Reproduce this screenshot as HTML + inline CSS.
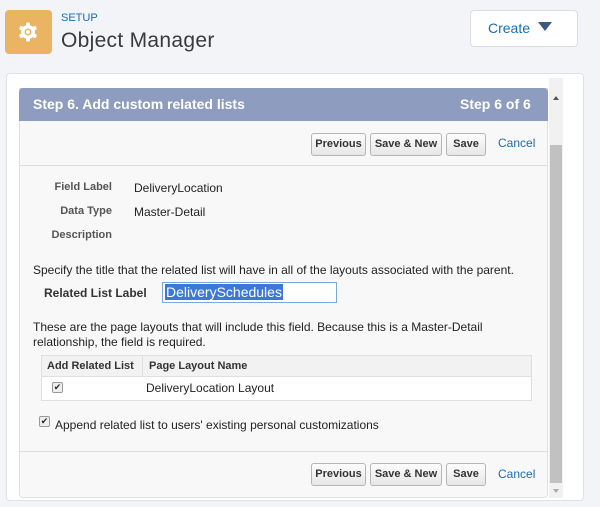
<!DOCTYPE html>
<html><head><style>
*{margin:0;padding:0;box-sizing:border-box}
body{width:600px;height:507px;background:#f3f4f8;font-family:"Liberation Sans",Arial,sans-serif;position:relative;overflow:hidden}
.a{position:absolute}
.btn{position:absolute;height:23px;border:1px solid #b5b5b5;border-radius:3px;background:linear-gradient(#fdfdfd,#e6e6e6);font-size:11px;font-weight:bold;color:#333;text-align:center;line-height:21px}
.lbl{position:absolute;font-size:11px;font-weight:bold;color:#555;text-align:right;width:112px;left:0}
.val{position:absolute;left:134px;font-size:12px;color:#222}
.t{position:absolute;font-size:12px;color:#222;white-space:nowrap}
.cb{position:absolute;width:11px;height:11px;border:1px solid #999;border-radius:2px;background:#eee;font-size:9px;line-height:9px;text-align:center;color:#222}
</style></head><body>
<div class="a" style="left:5px;top:10px;width:47px;height:44px;background:#ebb463;border-radius:4px"></div>
<svg class="a" style="left:17px;top:21px" width="22" height="22" viewBox="0 0 22 22"><g fill="#fff"><circle cx="11" cy="11" r="7"/><rect x="9" y="1.5" width="4" height="19" rx="1"/><rect x="9" y="1.5" width="4" height="19" rx="1" transform="rotate(60 11 11)"/><rect x="9" y="1.5" width="4" height="19" rx="1" transform="rotate(120 11 11)"/></g><circle cx="11" cy="11" r="3.5" fill="#ebb463"/><circle cx="11" cy="11" r="2" fill="#fff"/></svg>
<div class="a" style="left:61px;top:12px;font-size:11px;color:#1a6cb8">SETUP</div>
<div class="a" style="left:61px;top:29px;font-size:21px;color:#3a3a3a;letter-spacing:0.3px">Object Manager</div>
<div class="a" style="left:470px;top:10px;width:108px;height:37px;background:#fff;border:1px solid #d8dde6;border-radius:4px"></div>
<div class="a" style="left:488px;top:20px;font-size:14px;color:#1a6cb8">Create</div>
<div class="a" style="left:538px;top:22px;width:0;height:0;border-left:7px solid transparent;border-right:7px solid transparent;border-top:9px solid #3d5780"></div>
<div class="a" style="left:6px;top:73px;width:578px;height:428px;background:#fff;border:1px solid #dfe2e8;border-radius:4px"></div>
<div class="a" style="left:19px;top:88px;width:529px;height:410px;background:#f8f8f8;border:1px solid #e0e0e0;border-radius:0 0 4px 4px"></div>
<div class="a" style="left:19px;top:88px;width:529px;height:33px;background:#8e9dbf;border-radius:4px 4px 0 0"></div>
<div class="a" style="left:33px;top:96px;font-size:14px;font-weight:bold;color:#fff">Step 6. Add custom related lists</div>
<div class="a" style="left:460px;top:96px;font-size:14px;font-weight:bold;color:#fff">Step 6 of 6</div>
<div class="a" style="left:20px;top:165px;width:527px;height:1px;background:#dcdcdc"></div>
<div class="a" style="left:20px;top:451px;width:527px;height:1px;background:#dcdcdc"></div>
<div class="btn" style="left:311px;top:133px;width:55px">Previous</div>
<div class="btn" style="left:370px;top:133px;width:72px">Save &amp; New</div>
<div class="btn" style="left:446px;top:133px;width:40px">Save</div>
<div class="a" style="left:498px;top:136px;font-size:12px;color:#1a6cb8">Cancel</div>
<div class="btn" style="left:311px;top:463px;width:55px">Previous</div>
<div class="btn" style="left:370px;top:463px;width:72px">Save &amp; New</div>
<div class="btn" style="left:446px;top:463px;width:40px">Save</div>
<div class="a" style="left:498px;top:467px;font-size:12px;color:#1a6cb8">Cancel</div>
<div class="lbl" style="top:181px">Field Label</div><div class="val" style="top:181px">DeliveryLocation</div>
<div class="lbl" style="top:205px">Data Type</div><div class="val" style="top:205px">Master-Detail</div>
<div class="lbl" style="top:229px">Description</div>
<div class="t" style="left:33px;top:263px">Specify the title that the related list will have in all of the layouts associated with the parent.</div>
<div class="a" style="left:44px;top:286px;font-size:12px;font-weight:bold;color:#333">Related List Label</div>
<div class="a" style="left:162px;top:282px;width:175px;height:21px;border:1px solid #7aa7e0;background:#fff"></div>
<div class="a" style="left:165px;top:284px;font-size:14px;color:#fff;background:#3b78d8;padding:0 1px;line-height:16px">DeliverySchedules</div>
<div class="t" style="left:33px;top:320px">These are the page layouts that will include this field. Because this is a Master-Detail</div>
<div class="t" style="left:33px;top:335px">relationship, the field is required.</div>
<div class="a" style="left:41px;top:355px;width:491px;height:46px;border:1px solid #e0e0e0;background:#fff"></div>
<div class="a" style="left:42px;top:356px;width:489px;height:21px;background:#f2f2f2;border-bottom:1px solid #e0e0e0"></div>
<div class="a" style="left:142px;top:356px;width:1px;height:21px;background:#e0e0e0"></div>
<div class="a" style="left:47px;top:360px;font-size:11px;font-weight:bold;color:#333">Add Related List</div>
<div class="a" style="left:149px;top:360px;font-size:11px;font-weight:bold;color:#333">Page Layout Name</div>
<div class="cb" style="left:52px;top:382px">✔</div>
<div class="t" style="left:146px;top:381px">DeliveryLocation Layout</div>
<div class="cb" style="left:39px;top:416px">✔</div>
<div class="t" style="left:55px;top:418px">Append related list to users' existing personal customizations</div>
<div class="a" style="left:549px;top:78px;width:14px;height:420px;background:#f1f1f1"></div>
<div class="a" style="left:550px;top:145px;width:12px;height:338px;background:#c1c1c1"></div>
<div class="a" style="left:553px;top:96px;width:0;height:0;border-left:3px solid transparent;border-right:3px solid transparent;border-bottom:4px solid #555"></div>
<div class="a" style="left:553px;top:489px;width:0;height:0;border-left:3px solid transparent;border-right:3px solid transparent;border-top:4px solid #aaa"></div>
</body></html>
